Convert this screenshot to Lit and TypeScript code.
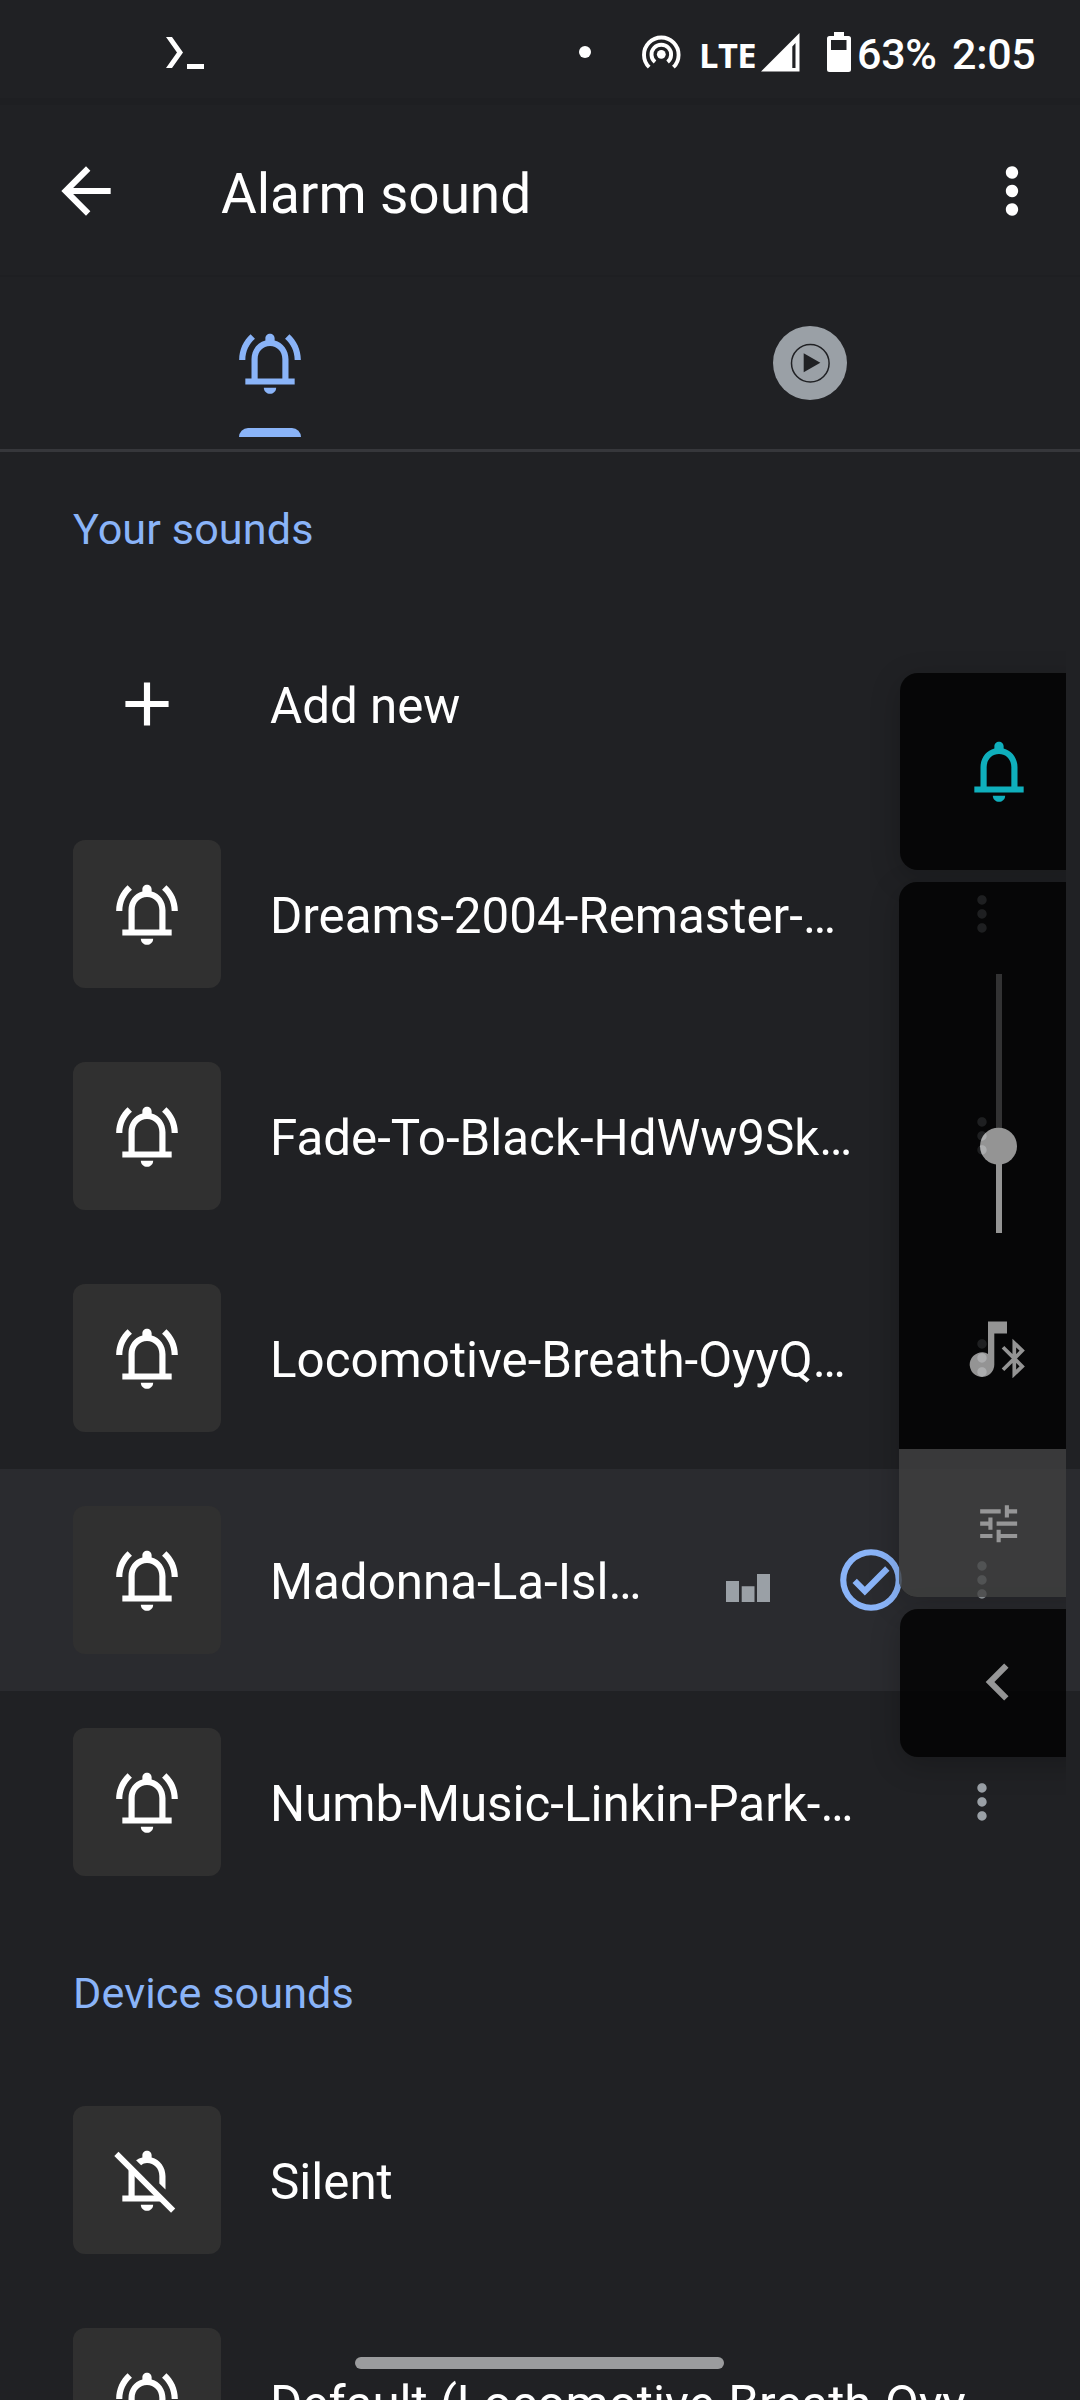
import { LitElement, html, css, svg, nothing } from "lit";
import { customElement, property } from "lit/decorators.js";
import { classMap } from "lit/directives/class-map.js";

const bellBody = svg`
  <path d="M12 22c1.1 0 2-.9 2-2h-4c0 1.1.9 2 2 2z"/>
  <path fill-rule="evenodd" d="M18 17v-6.2c0-2.95-1.8-5.4-4.5-6.1V4c0-.83-.67-1.5-1.5-1.5s-1.5.67-1.5 1.5v.7C7.8 5.4 6 7.85 6 10.8V17H4v2h16v-2h-2zM16 17H8v-6.3c0-2.4 1.7-4.2 4-4.2s4 1.8 4 4.2V17z"/>`;

const glyphs = {
  bell: bellBody,
  ringing: svg`${bellBody}
    <path d="M2 11h2c0-2.75 1.2-5.2 3.12-6.85L5.7 2.7C3.42 4.75 2 7.7 2 11zM22 11h-2c0-2.75-1.2-5.2-3.12-6.85L18.3 2.7C20.58 4.75 22 7.7 22 11z"/>`,
  silent: svg`
    <path d="M12 22c1.1 0 2-.9 2-2h-4c0 1.1.9 2 2 2z"/>
    <path d="M10.1 7.2L8.45 5.6c.6-.45 1.3-.75 2.05-.92V4c0-.83.67-1.5 1.5-1.5s1.5.67 1.5 1.5v.7c2.7.7 4.5 3.15 4.5 6.1v4.3l-2-1.95V10.7c0-2.4-1.7-4.2-4-4.2-.7 0-1.35.25-1.9.7z"/>
    <path d="M6 8.4l2 2V17h8l2 2H4v-2h2z"/>
    <path d="M2.75 2.85L1.4 4.2l18.4 18.4 1.35-1.35z"/>`,
  back: svg`<path d="M20 11H7.83l5.59-5.59L12 4l-8 8 8 8 1.41-1.41L7.83 13H20v-2z"/>`,
  more: svg`<path d="M12 8c1.1 0 2-.9 2-2s-.9-2-2-2-2 .9-2 2 .9 2 2 2zm0 2c-1.1 0-2 .9-2 2s.9 2 2 2 2-.9 2-2-.9-2-2-2zm0 6c-1.1 0-2 .9-2 2s.9 2 2 2 2-.9 2-2-.9-2-2-2z"/>`,
  plus: svg`<path d="M19 13h-6v6h-2v-6H5v-2h6V5h2v6h6v2z"/>`,
  check: svg`<path fill-rule="evenodd" d="M12 2a10 10 0 1 0 0 20 10 10 0 0 0 0-20zm0 18a8 8 0 1 1 0-16 8 8 0 0 1 0 16zM16.59 7.58L10 14.17l-2.59-2.58L6 13l4 4 8-8z"/>`,
  tune: svg`<path d="M3 17v2h6v-2H3zM3 5v2h10V5H3zm10 16v-2h8v-2h-8v-2h-2v6h2zM7 9v2H3v2h4v2h2V9H7zm14 4v-2H11v2h10zm-6-4h2V7h4V5h-4V3h-2v6z"/>`,
  chevron: svg`<path d="M15.41 7.41L14 6l-6 6 6 6 1.41-1.41L10.83 12z"/>`,
};

type Glyph = keyof typeof glyphs;

@customElement("ui-icon")
class UiIcon extends LitElement {
  @property() name: Glyph = "bell";
  static styles = css`
    :host { display: block; width: 74px; height: 74px; flex: none; }
    .glyph { display: block; width: 100%; height: 100%; fill: currentColor; }
  `;
  render() {
    return html`<svg class="glyph" viewBox="0 0 24 24">${glyphs[this.name]}</svg>`;
  }
}

@customElement("status-bar")
class StatusBar extends LitElement {
  static styles = css`
    :host { display: block; height: 98px; color: #fff; }
    .bar { display: flex; align-items: flex-start; height: 98px; padding-left: 166px; box-sizing: border-box; }
    .icon { display: block; flex: none; fill: #fff; }
    .prompt { margin-top: 36px; }
    .dot { flex: none; margin: 46px 0 0 374px; width: 12px; height: 12px; border-radius: 50%; background: #fff; }
    .hotspot { margin: 34px 0 0 50px; }
    .net { flex: none; margin: 34px 0 0 17px; width: 62px; font: 700 34.5px/42px "Open Sans", sans-serif; letter-spacing: -0.6px; }
    .signal { margin-top: 33px; }
    .battery { margin: 32px 0 0 27px; }
    .pct { flex: none; margin: 28px 0 0 6px; width: 95px; }
    .text { font: 500 43px/52px Roboto, sans-serif; letter-spacing: -0.3px; white-space: nowrap; }
    .time { margin-top: 28px; }
  `;
  render() {
    return html`<div class="bar">
      <svg class="icon prompt" width="39" height="34" viewBox="0 0 39 34">
        <path d="M0 1h6l11 15.5L6 32H0l11-15.5zM21 28h17v5H21z"/>
      </svg>
      <div class="dot"></div>
      <svg class="icon hotspot" width="41" height="38" viewBox="0 0 41 38">
        <circle cx="20.3" cy="20.3" r="4.4"/>
        <g fill="none" stroke="#fff" stroke-width="3.9">
          <path d="M8.2 33.2A17.3 17.3 0 1 1 32.4 33.2"/>
          <path d="M14 28A9.8 9.8 0 1 1 26.6 28"/>
        </g>
      </svg>
      <div class="net">LTE</div>
      <svg class="icon signal" width="39" height="39" viewBox="0 0 39 39">
        <path fill-rule="evenodd" d="M0 38.5L38.5 0v38.5zM31.3 13.5V35h3.2V10z"/>
      </svg>
      <svg class="icon battery" width="24" height="40" viewBox="0 0 24 40">
        <path fill-rule="evenodd" d="M7 0h10v4h4.500a2.500 2.500 0 0 1 2.500 2.500V37.500A2.500 2.500 0 0 1 21.500 40H2.500A2.500 2.500 0 0 1 0 37.500V6.500A2.500 2.500 0 0 1 2.500 4H7zM4 8v10h15.500V8z"/>
      </svg>
      <div class="text pct">63%</div>
      <div class="text time">2:05</div>
    </div>`;
  }
}

interface Sound {
  title: string;
  icon: Glyph;
  plain?: boolean;
  selected?: boolean;
  menu?: boolean;
}

@customElement("sound-row")
class SoundRow extends LitElement {
  @property({ attribute: false }) sound!: Sound;
  static styles = css`
    :host { display: block; }
    .row { display: flex; align-items: center; height: 222px; padding: 0 61px 0 73px; box-sizing: border-box; color: #fff; }
    .plain { height: 198px; }
    .selected { background: #2a2b2f; }
    .thumb { display: flex; align-items: center; justify-content: center; flex: none; width: 148px; height: 148px; border-radius: 12px; background: #303030; }
    .plain .thumb { background: none; }
    .title { flex: 1; margin-left: 49px; padding-top: 4px; font: 400 49.3px/60px Roboto, sans-serif; white-space: nowrap; }
    .bars { flex: none; margin: 16px 63px 0 0; fill: #9aa0a6; }
    .check { color: #8ab4f8; margin-right: 37px; }
    .more { width: 74px; height: 56px; color: #9aa0a6; }
  `;
  render() {
    const s = this.sound;
    return html`<div class=${classMap({ row: true, plain: !!s.plain, selected: !!s.selected })}>
      <div class="thumb"><ui-icon name=${s.icon}></ui-icon></div>
      <div class="title">${s.title}</div>
      ${s.selected
        ? html`<svg class="bars" width="45" height="28" viewBox="0 0 45 28">
              <path d="M0 7h13v21H0zM15.700 12.300h12.800V28H15.700zM31 0h13v28H31z"/>
            </svg>
            <ui-icon class="check" name="check"></ui-icon>`
        : nothing}
      ${s.menu ? html`<ui-icon class="more" name="more"></ui-icon>` : nothing}
    </div>`;
  }
}

@customElement("volume-panel")
class VolumePanel extends LitElement {
  static styles = css`
    :host { display: block; }
    .stack { display: flex; flex-direction: column; gap: 12px; width: 198px; opacity: 0.8; color: #b1b1b1; clip-path: inset(-80px 31px -80px -80px); }
    .card { display: flex; flex-direction: column; align-items: center; justify-content: center; margin-left: 1px; border-radius: 18px; background: #000; box-shadow: 0 8px 30px rgba(0, 0, 0, 0.22); overflow: hidden; }
    .ringer { height: 197px; color: #0cd3e3; }
    .ringer, .collapse { box-sizing: border-box; padding-bottom: 2px; }
    .collapse { padding-right: 1px; }
    .main { height: 715px; margin-left: 0; justify-content: flex-start; }
    .slider { display: block; margin-top: 91px; }
    .stream { display: block; margin: 88px 0 71px; fill: currentColor; }
    .settings { display: flex; align-items: center; justify-content: center; width: 100%; height: 148px; background: #404040; }
    .tune { width: 49.3px; height: 49.3px; margin: 1px 0 0 1px; }
    .collapse { height: 148px; }
  `;
  render() {
    return html`<div class="stack">
      <div class="card ringer"><ui-icon name="bell"></ui-icon></div>
      <div class="card main">
        <svg class="slider" width="38" height="260" viewBox="0 0 38 260">
          <path d="M17 1h6v172h-6z" fill="#373737"/>
          <path d="M17 173h6v87h-6z" fill="#b1b1b1"/>
          <circle cx="19.500" cy="173.200" r="18.500" fill="#b1b1b1"/>
        </svg>
        <svg class="stream" width="58" height="57" viewBox="0 0 58 57">
          <path d="M19 0.500H38V12.500H25.300V43.500A12.300 12.300 0 1 1 19 32.900z"/>
          <path d="M34 26.200L53.200 45.400 45.300 53V22L53.200 29.600 34 48.800" fill="none" stroke="currentColor" stroke-width="3.700"/>
        </svg>
        <div class="settings"><ui-icon class="tune" name="tune"></ui-icon></div>
      </div>
      <div class="card collapse"><ui-icon name="chevron"></ui-icon></div>
    </div>`;
  }
}

const yourSounds: Sound[] = [
  { title: "Add new", icon: "plus", plain: true },
  { title: "Dreams-2004-Remaster-…", icon: "ringing", menu: true },
  { title: "Fade-To-Black-HdWw9Sk…", icon: "ringing", menu: true },
  { title: "Locomotive-Breath-OyyQ…", icon: "ringing", menu: true },
  { title: "Madonna-La-Isl…", icon: "ringing", selected: true, menu: true },
  { title: "Numb-Music-Linkin-Park-…", icon: "ringing", menu: true },
];

const deviceSounds: Sound[] = [
  { title: "Silent", icon: "silent" },
  { title: "Default (Locomotive-Breath-Oyy…", icon: "ringing" },
];

@customElement("app-root")
class AppRoot extends LitElement {
  static styles = css`
    :host { display: block; position: relative; width: 1080px; height: 2400px; overflow: hidden; background: #202124; font-family: Roboto, sans-serif; color: #fff; }
    .appbar { display: flex; align-items: center; height: 179px; padding: 2px 31px 0 49px; box-sizing: border-box; border-top: 7px solid #1e1f22; border-bottom: 2px solid #1e1f22; }
    .heading { flex: 1; margin: 6px 0 0 98px; font-size: 55px; line-height: 66px; font-weight: 400; letter-spacing: -0.1px; }
    .tabs { display: grid; grid-template-columns: 1fr 1fr; height: 175px; box-sizing: border-box; border-bottom: 3px solid #36373b; }
    .tab { display: flex; flex-direction: column; align-items: center; padding-top: 49px; }
    .active { color: #8ab4f8; }
    .indicator { width: 62px; height: 9px; margin-top: 28px; border-radius: 9px 9px 0 0; background: #8ab4f8; }
    .disc { display: block; width: 74px; height: 74px; }
    .section { height: 156px; padding: 55px 73px 0; box-sizing: border-box; color: #8ab4f8; font-size: 43.17px; line-height: 52px; letter-spacing: 0.1px; white-space: nowrap; }
    .first { height: 153px; padding-top: 52px; }
    .volume { position: absolute; left: 899px; top: 673px; }
    .handle { position: absolute; left: 355px; top: 2357px; width: 369px; height: 12px; border-radius: 6px; background: #9b9c9e; }
  `;
  render() {
    return html`
      <status-bar></status-bar>
      <div class="appbar">
        <ui-icon name="back"></ui-icon>
        <div class="heading">Alarm sound</div>
        <ui-icon name="more"></ui-icon>
      </div>
      <div class="tabs">
        <div class="tab active">
          <ui-icon name="ringing"></ui-icon>
          <div class="indicator"></div>
        </div>
        <div class="tab">
          <svg class="disc" viewBox="0 0 74 74">
            <circle cx="37" cy="37" r="37" fill="#9aa0a6"/>
            <circle cx="37.300" cy="37.200" r="18.800" fill="none" stroke="#202124" stroke-width="1.500"/>
            <path d="M30.700 27.300L47.300 36.800 30.700 46.300z" fill="#202124"/>
          </svg>
        </div>
      </div>
      <div class="section first">Your sounds</div>
      ${yourSounds.map((s) => html`<sound-row .sound=${s}></sound-row>`)}
      <div class="section">Device sounds</div>
      ${deviceSounds.map((s) => html`<sound-row .sound=${s}></sound-row>`)}
      <volume-panel class="volume"></volume-panel>
      <div class="handle"></div>
    `;
  }
}
